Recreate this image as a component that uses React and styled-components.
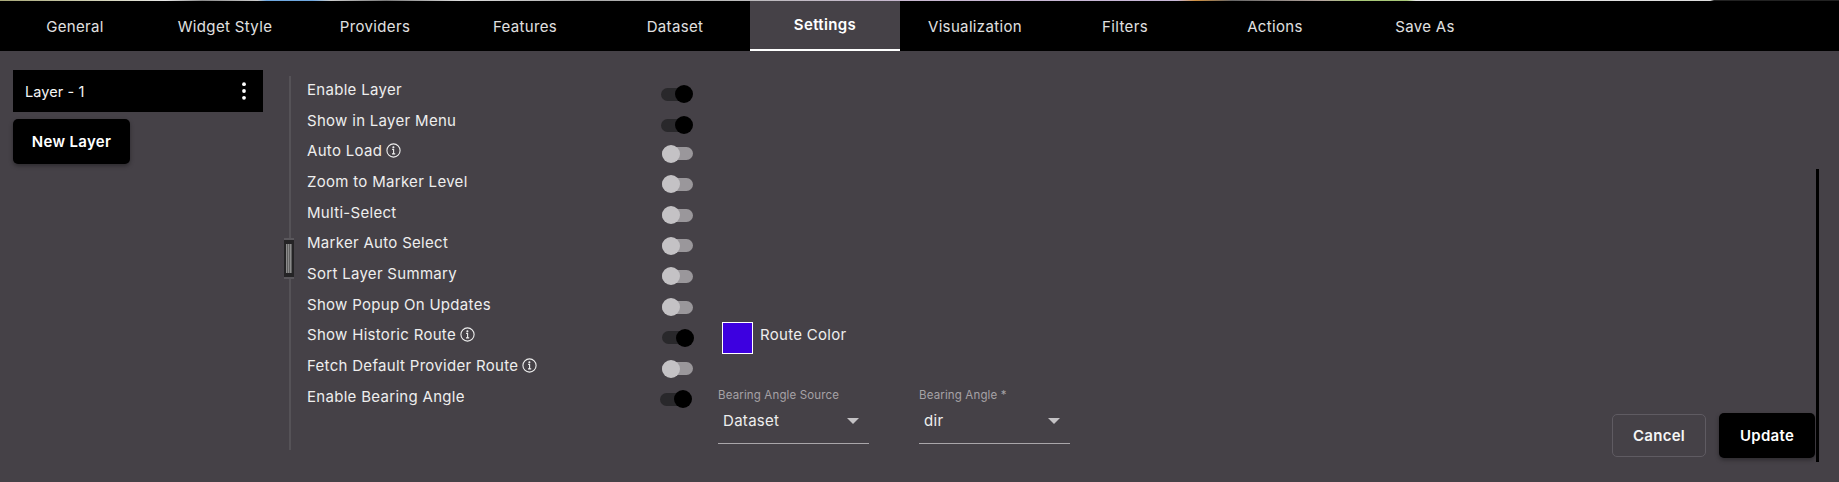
import React from "react";
import styled, { createGlobalStyle } from "styled-components";

const Global = createGlobalStyle`
  html, body { margin: 0; padding: 0; background: #454147; }
  * { box-sizing: border-box; }
  #root { width: 1839px; height: 482px; overflow: hidden; }
`;

const Page = styled.div`
  width: 1839px; height: 482px; display: flex; flex-direction: column;
  background: #454147; color: #f2f2f2;
  font-family: Inter, "Open Sans", "Liberation Sans", sans-serif;
  font-size: 14px; font-weight: 400;
`;
const TopStrip = styled.div`
  height: 1px; flex: none;
  background: linear-gradient(90deg,
    #a8a878 0%, #d8d8c0 6%, #e8e8e8 9%, #888 11%, #ccc 14%, #6fa8e0 14.5%, #6fa8e0 17%,
    #ccc 18%, #777 21%, #ddd 25%, #aaa 32%, #bbb 40%, #c8b8d0 49%, #c8b8d8 64%, #d09040 65%, #666 67%,
    #b8a8a0 72%, #a8c878 73.5%, #a8c878 76.5%, #e8e8e8 77%, #ddd 93%, #222 93.2%, #222 100%);
`;
const TabBar = styled.nav`
  height: 50px; flex: none; display: flex; background: #000;
`;
const Tab = styled.div`
  width: 150px; height: 100%; display: flex; align-items: center; justify-content: center;
  font-size: 15px; letter-spacing: .35px;
  padding-bottom: ${p => (p.$active ? "1px" : "0")};
  font-weight: ${p => (p.$active ? 600 : 400)};
  color: ${p => (p.$active ? "#fff" : "#e0e0e0")};
  background: ${p => (p.$active ? "#454147" : "transparent")};
  border-bottom: ${p => (p.$active ? "2px solid #fff" : "0")};
`;
const Body = styled.div`
  flex: 1; min-height: 0; display: flex; padding-left: 13px;
`;
const LayerColumn = styled.aside`
  width: 250px; flex: none; padding-top: 19px; display: flex; flex-direction: column; align-items: flex-start; gap: 7px;
`;
const LayerRow = styled.div`
  width: 100%; height: 42px; background: #000; display: flex; align-items: center; justify-content: space-between;
  padding: 0 16px 0 12px; font-size: 14.5px; letter-spacing: .1px; color: #f5f5f5;
`;
const PrimaryButton = styled.button`
  border: 0; background: #000; color: #fff; border-radius: 5px; font: inherit; font-weight: 600; font-size: 15px; letter-spacing: .3px;
  width: ${p => p.$w}; height: 45px; padding: 0;
  box-shadow: 0 2px 4px rgba(0,0,0,.35);
`;
const OutlineButton = styled.button`
  background: transparent; color: #f5f5f5; border: 1px solid #5f5b62; border-radius: 5px; font: inherit; font-weight: 600; font-size: 15px; letter-spacing: .3px;
  width: 94px; height: 43px; padding: 0;
`;
const Divider = styled.div`
  position: relative; flex: none; width: 2px; height: 374px; margin: 25px 0 0 26px; background: #555257;
`;
const Handle = styled.div`
  position: absolute; left: -5px; top: 162px; width: 10px; height: 41px;
  background: #252426; border-top: 2px solid #5a575c; border-bottom: 2px solid #5a575c;
  display: flex; justify-content: center; align-items: center;
  &::after { content: ""; width: 6px; height: 29px; background: repeating-linear-gradient(90deg, #8b8b8b 0 1px, #5f5f5f 1px 2px); }
`;
const SettingsList = styled.div`
  flex: none; width: 387px; margin-left: 16px; padding-top: 23px; display: flex; flex-direction: column;
`;
const SettingRow = styled.div`
  height: 30.7px; flex: none; display: flex; align-items: center; justify-content: space-between;
`;
const SettingLabel = styled.span`
  display: inline-flex; align-items: center; gap: 4px; font-size: 15px; color: #eee; letter-spacing: .3px;
`;
const Toggle = styled.span`
  position: relative; display: block; width: 31px; height: 13px; border-radius: 7px;
  margin-top: ${p => p.$top || 6}px;
  margin-right: ${p => (p.$shift === undefined ? 1 : p.$shift)}px;
  background: ${p => (p.$on ? "#29282b" : "#9a979b")};
  &::after {
    content: ""; position: absolute; top: -2.5px; width: 18px; height: 18px; border-radius: 50%;
    ${p => (p.$on ? "right: -1px;" : "left: 0;")}
    background: ${p => (p.$on ? "#000" : "#c4c2c5")};
  }
`;
const Extras = styled.div`
  flex: none; width: 352px; margin-left: 24px; padding-top: 271px; display: flex; flex-direction: column;
`;
const RouteRow = styled.div`
  display: flex; align-items: flex-start; gap: 7px; margin-left: 4px; height: 66px;
`;
const Swatch = styled.div`
  width: 31px; height: 32px; background: #3d00e0; border: 1px solid #fff;
`;
const RouteLabel = styled.span`
  font-size: 15px; color: #eee; margin-top: 3px; letter-spacing: .3px;
`;
const SelectRow = styled.div`
  display: flex; gap: 50px;
`;
const SelectField = styled.div`
  width: 151px; height: 56px; border-bottom: 1px solid #a9a6aa; display: flex; flex-direction: column;
`;
const SelectLabel = styled.label`
  font-size: 11.5px; color: #a5a2a6; line-height: 14px; letter-spacing: .15px;
`;
const SelectValue = styled.div`
  display: flex; justify-content: space-between; align-items: center; margin-top: 9px; padding: 0 10px 0 5px;
  font-size: 15px; letter-spacing: .3px; color: #eee;
`;
const Caret = styled.span`
  width: 0; height: 0; border-left: 6.5px solid transparent; border-right: 6.5px solid transparent; border-top: 6.5px solid #c4c2c5;
`;
const Spacer = styled.div` flex: 1; `;
const Footer = styled.div`
  align-self: flex-end; display: flex; align-items: center; gap: 13px; margin-bottom: 24px;
`;
const ScrollLine = styled.div`
  flex: none; width: 3px; height: 293px; margin: 118px 20px 0 1px; background: #000;
`;

const InfoIcon = () => (
  <svg width="15" height="15" viewBox="0 0 15 15" fill="none" stroke="#eee" strokeWidth="1.1">
    <circle cx="7.5" cy="7.5" r="6.6" />
    <path d="M6.1 6.4H7.6V10.8M6 10.9H9.2" />
    <circle cx="7.4" cy="4.2" r=".5" fill="#eee" />
  </svg>
);
const MoreIcon = () => (
  <svg width="6" height="20" viewBox="0 0 6 20" fill="#fff">
    <circle cx="3" cy="3.2" r="1.9" /><circle cx="3" cy="10" r="1.9" /><circle cx="3" cy="16.8" r="1.9" />
  </svg>
);

const tabs = ["General", "Widget Style", "Providers", "Features", "Dataset", "Settings", "Visualization", "Filters", "Actions", "Save As"];
const settings = [
  { label: "Enable Layer", on: true, top: 10, shift: 2 },
  { label: "Show in Layer Menu", on: true, top: 10, shift: 2 },
  { label: "Auto Load", info: true },
  { label: "Zoom to Marker Level" },
  { label: "Multi-Select" },
  { label: "Marker Auto Select" },
  { label: "Sort Layer Summary" },
  { label: "Show Popup On Updates" },
  { label: "Show Historic Route", info: true, on: true, shift: 1 },
  { label: "Fetch Default Provider Route", info: true },
  { label: "Enable Bearing Angle", on: true, shift: 3 },
];

export default function App() {
  return (
    <Page>
      <Global />
      <TopStrip />
      <TabBar>
        {tabs.map(t => <Tab key={t} $active={t === "Settings"}>{t}</Tab>)}
      </TabBar>
      <Body>
        <LayerColumn>
          <LayerRow>Layer - 1<MoreIcon /></LayerRow>
          <PrimaryButton $w="117px">New Layer</PrimaryButton>
        </LayerColumn>
        <Divider><Handle /></Divider>
        <SettingsList>
          {settings.map(s => (
            <SettingRow key={s.label}>
              <SettingLabel>{s.label}{s.info && <InfoIcon />}</SettingLabel>
              <Toggle $on={s.on} $shift={s.shift} $top={s.top} />
            </SettingRow>
          ))}
        </SettingsList>
        <Extras>
          <RouteRow>
            <Swatch />
            <RouteLabel>Route Color</RouteLabel>
          </RouteRow>
          <SelectRow>
            <SelectField>
              <SelectLabel>Bearing Angle Source</SelectLabel>
              <SelectValue>Dataset<Caret /></SelectValue>
            </SelectField>
            <SelectField>
              <SelectLabel>Bearing Angle *</SelectLabel>
              <SelectValue>dir<Caret /></SelectValue>
            </SelectField>
          </SelectRow>
        </Extras>
        <Spacer />
        <Footer>
          <OutlineButton>Cancel</OutlineButton>
          <PrimaryButton $w="96px">Update</PrimaryButton>
        </Footer>
        <ScrollLine />
      </Body>
    </Page>
  );
}
